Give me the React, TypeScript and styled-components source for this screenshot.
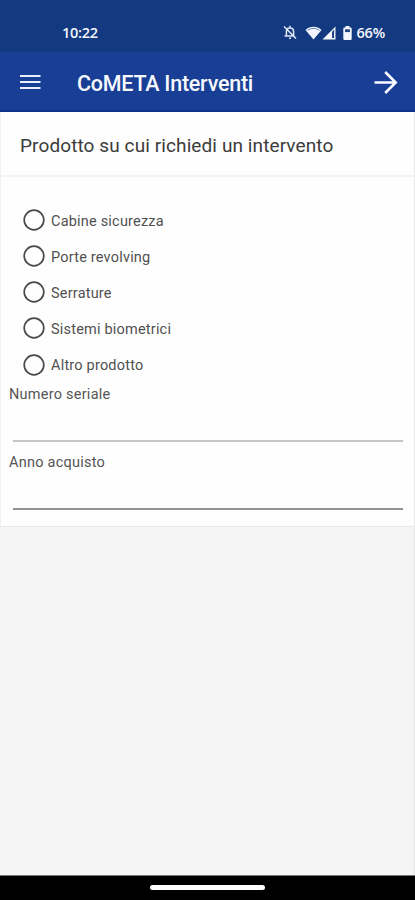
import React from "react";
import styled, { createGlobalStyle } from "styled-components";

const GlobalStyle = createGlobalStyle`
  * { box-sizing: border-box; }
  body { margin: 0; background: #f5f5f5; font-family: Roboto, sans-serif; }
`;

const Screen = styled.div`
  display: flex;
  flex-direction: column;
  width: 415px;
  height: 900px;
  overflow: hidden;
  background: #f5f5f5;
`;

const StatusBar = styled.div`
  display: flex;
  align-items: center;
  flex: 0 0 52px;
  padding: 13px 30px 0 62px;
  background: #133a80;
  color: #f3f6fc;
`;

const Clock = styled.span`
  flex: 1;
  font: 600 14.5px/18px "Open Sans", sans-serif;
  letter-spacing: -0.3px;
`;

const StatusIcons = styled.div`
  display: flex;
  align-items: center;
  svg { display: block; }
`;

const Battery = styled.span`
  margin-left: 4px;
  font: 600 14.5px/18px "Open Sans", sans-serif;
  letter-spacing: -0.2px;
`;

const AppBar = styled.header`
  display: flex;
  align-items: center;
  flex: 0 0 60px;
  padding: 1px 17px 0 20px;
  border-bottom: 2px solid #0e3288;
  background: #183f95;
  svg { display: block; }
`;

const AppTitle = styled.h1`
  flex: 1;
  margin: 5px 0 0 36px;
  color: #f6f8fd;
  font-size: 21.5px;
  line-height: 28px;
  font-weight: 500;
  letter-spacing: -0.25px;
  white-space: nowrap;
`;

const Content = styled.main`
  flex: 1;
  border-right: 1px solid #e6e6e6;
`;

const Card = styled.section`
  height: 415px;
  border-left: 1px solid #f0f0f0;
  border-bottom: 1px solid #e9e9e9;
  background: #fefefe;
`;

const Question = styled.h2`
  height: 65px;
  margin: 0;
  padding: 21px 0 0 19px;
  border-bottom: 2px solid #f3f3f3;
  color: #3c3c3c;
  font-size: 19px;
  line-height: 26px;
  font-weight: 400;
  letter-spacing: 0.1px;
  white-space: nowrap;
`;

const Options = styled.div`
  padding: 25px 0 0 22px;
`;

const Option = styled.label`
  display: flex;
  align-items: center;
  height: 36.15px;
`;

const Radio = styled.svg`
  display: block;
  width: 22px;
  height: 22px;
`;

const OptionText = styled.span`
  margin: 3px 0 0 6px;
  color: #505050;
  font-size: 14.5px;
  line-height: 20px;
  letter-spacing: 0.2px;
`;

const Field = styled.label<{ $line: string }>`
  display: block;
  height: 68px;
  padding: 2px 11px 0 8px;
  color: #555;
  font-size: 14.5px;
  line-height: 20px;
  letter-spacing: 0.24px;
  &::after {
    content: "";
    display: block;
    height: 2px;
    margin: 35px 0 0 4px;
    background: ${(p) => p.$line};
  }
`;

const NavBar = styled.footer`
  display: flex;
  justify-content: center;
  flex: 0 0 25px;
  padding-top: 9px;
  border-top: 1px solid #777;
  background: #000;
`;

const HomeHandle = styled.div`
  width: 115px;
  height: 5px;
  border-radius: 3px;
  background: #fff;
`;

const IconSlot = styled.span<{ $gap: number }>`
  margin-left: ${(p) => p.$gap}px;
`;

const options = [
  "Cabine sicurezza",
  "Porte revolving",
  "Serrature",
  "Sistemi biometrici",
  "Altro prodotto",
];

const MutedBell = () => (
  <svg width="14" height="15" viewBox="0 0 14 15" fill="none" stroke="#dfe7f5" strokeWidth="1.5">
    <path d="M3.4 10.8V6.6C3.4 4.2 4.7 2.9 7 2.9s3.6 1.3 3.6 3.7v4.2M1.5 11h10M7 .8v1.8M6 13.2h2M1 1.5l12 12" />
  </svg>
);

const Wifi = () => (
  <svg width="17" height="14" viewBox="0 0 17 14">
    <path d="M.5 4C5.2-.2 11.8-.2 16.5 4l-8 9.5z" fill="#f3f6fc" />
    <path d="M2.5 4.4c3.7-2.6 8.3-2.6 12 0" fill="none" stroke="#6a84b4" strokeWidth="1" />
  </svg>
);

const Signal = () => (
  <svg width="14" height="14" viewBox="0 0 14 14">
    <path d="M.5 13.5 13.5.5v13z" fill="#f3f6fc" />
    <path d="M10 5.7 12.1 3.6v8.5H10z" fill="#234583" />
  </svg>
);

const BatteryIcon = () => (
  <svg width="9" height="14" viewBox="0 0 9 14">
    <path d="M2.5 0h4v1.5h1A1.2 1.2 0 0 1 8.7 2.7v10a1.2 1.2 0 0 1-1.2 1.2h-6A1.2 1.2 0 0 1 .3 12.7v-10a1.2 1.2 0 0 1 1.2-1.2h1z" fill="#f3f6fc" />
    <path d="M2 3.3h5v2.8H2z" fill="#234583" />
  </svg>
);

const MenuIcon = () => (
  <svg width="21" height="16" viewBox="0 0 21 16" stroke="#e8eefa" strokeWidth="2.1">
    <path d="M0 2h20.5M0 8h20.5M0 14h20.5" />
  </svg>
);

const ArrowIcon = () => (
  <svg width="24" height="24" viewBox="0 0 24 24" fill="none" stroke="#f8faff" strokeWidth="2.6">
    <path d="M.5 12.5h21M11.2 2 21.7 12.5 11.2 23" />
  </svg>
);

export default function App() {
  return (
    <Screen>
      <GlobalStyle />
      <StatusBar>
        <Clock>10:22</Clock>
        <StatusIcons>
          <MutedBell />
          <IconSlot $gap={8}><Wifi /></IconSlot>
          <IconSlot $gap={0}><Signal /></IconSlot>
          <IconSlot $gap={7}><BatteryIcon /></IconSlot>
          <Battery>66%</Battery>
        </StatusIcons>
      </StatusBar>
      <AppBar>
        <MenuIcon />
        <AppTitle>CoMETA Interventi</AppTitle>
        <ArrowIcon />
      </AppBar>
      <Content>
        <Card>
          <Question>Prodotto su cui richiedi un intervento</Question>
          <Options>
            {options.map((label) => (
              <Option key={label}>
                <Radio viewBox="0 0 22 22">
                  <circle cx="11" cy="11" r="9.8" fill="none" stroke="#4a4a4a" strokeWidth="1.7" />
                </Radio>
                <OptionText>{label}</OptionText>
              </Option>
            ))}
          </Options>
          <Field $line="#c6c6c6">Numero seriale</Field>
          <Field $line="#929292">Anno acquisto</Field>
        </Card>
      </Content>
      <NavBar>
        <HomeHandle />
      </NavBar>
    </Screen>
  );
}
